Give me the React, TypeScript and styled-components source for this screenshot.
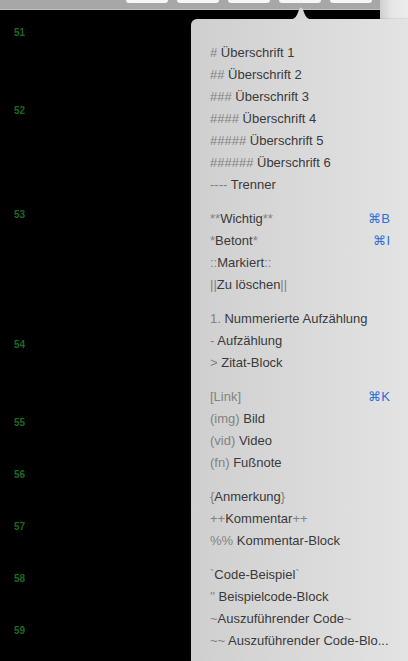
import React from "react";
import styled, { createGlobalStyle } from "styled-components";

const GlobalStyle = createGlobalStyle`
  html, body {
    margin: 0;
    padding: 0;
    background: #000;
    overflow: hidden;
  }
  body {
    font-family: "Liberation Sans", Arial, Helvetica, sans-serif;
  }
`;

const Screen = styled.div`
  position: relative;
  width: 408px;
  height: 661px;
  display: flex;
  overflow: hidden;
  background: #000;
`;

const MainColumn = styled.div`
  width: 380px;
  display: flex;
  flex-direction: column;
`;

const Toolbar = styled.div`
  height: 9px;
  flex: none;
  background: #a7a7a7;
  border-bottom: 1px solid #bfbfbf;
  display: flex;
  align-items: flex-start;
  gap: 9px;
  padding-left: 126px;
`;

const ToolButton = styled.div`
  width: 42px;
  height: 3px;
  background: #f6f6f6;
  border-radius: 0 0 4px 4px;
`;

const Editor = styled.div`
  flex: 1;
  background: #000;
  padding-top: 10px;
  display: flex;
  flex-direction: column;
`;

const EditorLine = styled.div<{ $rows: number }>`
  height: ${(p) => p.$rows * 26}px;
  display: flex;
`;

const LineNumber = styled.div`
  width: 25px;
  text-align: right;
  font-size: 10px;
  font-weight: bold;
  line-height: 26px;
  color: #1b6a22;
`;

const SideStrip = styled.div`
  flex: 1;
  background: linear-gradient(90deg, #cfcfcf 0%, #e6e6e6 40%, #ececec 100%);
`;

const Popover = styled.div`
  position: absolute;
  left: 191px;
  top: 19px;
  right: 0;
  bottom: 0;
  border-top-left-radius: 6px;
  background: linear-gradient(90deg, #cfcfcf 0%, #d9d9d9 50%, #e3e3e3 100%);
  box-shadow: 0 0 2px rgba(0, 0, 0, 0.25);
  padding: 23px 17px 0 19px;
  display: flex;
  flex-direction: column;
`;

const Arrow = styled.svg`
  position: absolute;
  left: 99px;
  top: -13px;
  width: 22px;
  height: 14px;
`;

const Group = styled.div`
  display: flex;
  flex-direction: column;
  & + & {
    margin-top: 12px;
  }
`;

const Row = styled.div`
  height: 22px;
  display: flex;
  align-items: center;
  justify-content: space-between;
  font-size: 13px;
  line-height: 22px;
  white-space: nowrap;
`;

const Label = styled.span`
  color: #3a3a3a;
`;

const Marker = styled.span`
  color: #828282;
`;

const Shortcut = styled.span`
  color: #2d6fd6;
  padding-right: 1px;
`;

type Part = [kind: "m" | "t", text: string];
type Item = { parts: Part[]; shortcut?: string };

const groups: Item[][] = [
  [
    { parts: [["m", "# "], ["t", "Überschrift 1"]] },
    { parts: [["m", "## "], ["t", "Überschrift 2"]] },
    { parts: [["m", "### "], ["t", "Überschrift 3"]] },
    { parts: [["m", "#### "], ["t", "Überschrift 4"]] },
    { parts: [["m", "##### "], ["t", "Überschrift 5"]] },
    { parts: [["m", "###### "], ["t", "Überschrift 6"]] },
    { parts: [["m", "---- "], ["t", "Trenner"]] },
  ],
  [
    { parts: [["m", "**"], ["t", "Wichtig"], ["m", "**"]], shortcut: "⌘B" },
    { parts: [["m", "*"], ["t", "Betont"], ["m", "*"]], shortcut: "⌘I" },
    { parts: [["m", "::"], ["t", "Markiert"], ["m", "::"]] },
    { parts: [["m", "||"], ["t", "Zu löschen"], ["m", "||"]] },
  ],
  [
    { parts: [["m", "1. "], ["t", "Nummerierte Aufzählung"]] },
    { parts: [["m", "- "], ["t", "Aufzählung"]] },
    { parts: [["m", "> "], ["t", "Zitat-Block"]] },
  ],
  [
    { parts: [["m", "[Link]"]], shortcut: "⌘K" },
    { parts: [["m", "(img) "], ["t", "Bild"]] },
    { parts: [["m", "(vid) "], ["t", "Video"]] },
    { parts: [["m", "(fn) "], ["t", "Fußnote"]] },
  ],
  [
    { parts: [["m", "{"], ["t", "Anmerkung"], ["m", "}"]] },
    { parts: [["m", "++"], ["t", "Kommentar"], ["m", "++"]] },
    { parts: [["m", "%% "], ["t", "Kommentar-Block"]] },
  ],
  [
    { parts: [["m", "`"], ["t", "Code-Beispiel"], ["m", "`"]] },
    { parts: [["m", "'' "], ["t", "Beispielcode-Block"]] },
    { parts: [["m", "~"], ["t", "Auszuführender Code"], ["m", "~"]] },
    { parts: [["m", "~~ "], ["t", "Auszuführender Code-Blo..."]] },
  ],
];

const lines: [number, number][] = [
  [51, 3],
  [52, 4],
  [53, 5],
  [54, 3],
  [55, 2],
  [56, 2],
  [57, 2],
  [58, 2],
  [59, 2],
];

export default function App() {
  return (
    <>
      <GlobalStyle />
      <Screen>
        <MainColumn>
          <Toolbar>
            {[0, 1, 2, 3, 4].map((i) => (
              <ToolButton key={i} />
            ))}
          </Toolbar>
          <Editor>
            {lines.map(([n, rows]) => (
              <EditorLine key={n} $rows={rows}>
                <LineNumber>{n}</LineNumber>
              </EditorLine>
            ))}
          </Editor>
        </MainColumn>
        <SideStrip />
        <Popover>
          <Arrow viewBox="0 0 22 14">
            <path
              d="M0 13.5 C5 13.5 7 10 9 3.5 Q11 -0.5 13 3.5 C15 10 17 13.5 22 13.5 Z"
              fill="#d6d6d6"
            />
          </Arrow>
          {groups.map((g, gi) => (
            <Group key={gi}>
              {g.map((item, ii) => (
                <Row key={ii}>
                  <span>
                    {item.parts.map(([k, t], pi) =>
                      k === "m" ? (
                        <Marker key={pi}>{t}</Marker>
                      ) : (
                        <Label key={pi}>{t}</Label>
                      )
                    )}
                  </span>
                  {item.shortcut && <Shortcut>{item.shortcut}</Shortcut>}
                </Row>
              ))}
            </Group>
          ))}
        </Popover>
      </Screen>
    </>
  );
}
